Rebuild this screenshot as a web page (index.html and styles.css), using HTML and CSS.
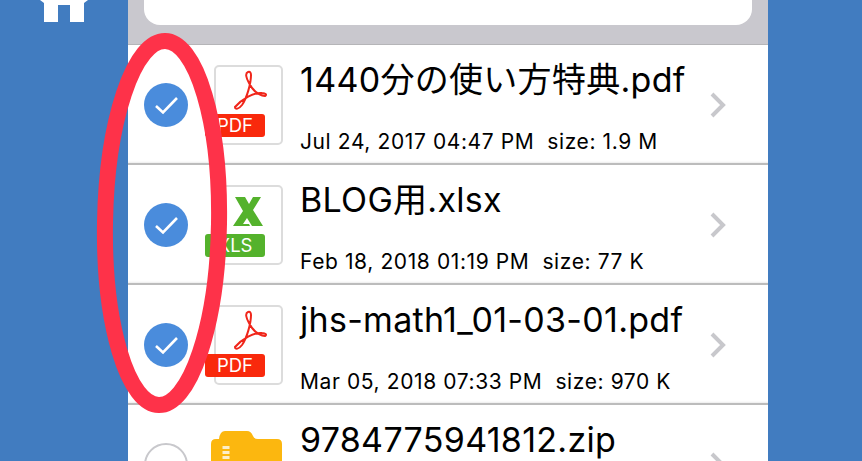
FILE: index.html
```html
<!DOCTYPE html>
<html lang="ja">
<head>
    <meta charset="UTF-8">
    <title>Files</title>
    <link rel="stylesheet" href="styles.css">
</head>
<body>
    <div class="page">
        <div class="side-left">
            <svg class="home" width="48" height="23" viewBox="0 0 48 23">
                <path d="M0 0H48L44 3V22H30V5H18V22H4V3Z" fill="#fff"/>
            </svg>
        </div>
        <main class="panel">
            <div class="search-bar"><div class="search-box"></div></div>
            <div class="row">
                <span class="check on"><svg width="44" height="44" viewBox="0 0 44 44"><path d="M12 23L19 29.500L33 15" fill="none" stroke="#fff" stroke-width="2.600"/></svg></span>
                <div class="thumb">
                    <svg class="acrobat" width="36" height="44" viewBox="0 0 36 44"><path d="M16 3C13 4 14 9 17 14C20 20 25 26 33 27C35 26 34 24 30 24C22 23 10 30 3 38C3 41 7 40 10 36C15 29 19 14 19 6C19 4 18 2 16 3Z" fill="none" stroke="#f0261b" stroke-width="2"/></svg>
                    <span class="badge red">PDF</span>
                </div>
                <div class="info">
                    <div class="name">1440分の使い方特典.pdf</div>
                    <div class="meta">Jul 24, 2017 04:47 PM&nbsp; size: 1.9 M</div>
                </div>
                <svg class="chevron" width="16" height="26" viewBox="0 0 16 26"><path d="M2 2L13 13L2 24" fill="none" stroke="#c8c8cc" stroke-width="4"/></svg>
            </div>
            <div class="row">
                <span class="check on"><svg width="44" height="44" viewBox="0 0 44 44"><path d="M12 23L19 29.500L33 15" fill="none" stroke="#fff" stroke-width="2.600"/></svg></span>
                <div class="thumb">
                    <svg class="xl" width="34" height="34" viewBox="0 0 34 34"><path d="M3 2H13L17 9L21 2H29L21 15L31 31H20L15 23L11 29H17L18 31H1L11 16Z" fill="#54b22c"/></svg>
                    <span class="badge green">XLS</span>
                </div>
                <div class="info">
                    <div class="name">BLOG用.xlsx</div>
                    <div class="meta">Feb 18, 2018 01:19 PM&nbsp; size: 77 K</div>
                </div>
                <svg class="chevron" width="16" height="26" viewBox="0 0 16 26"><path d="M2 2L13 13L2 24" fill="none" stroke="#c8c8cc" stroke-width="4"/></svg>
            </div>
            <div class="row">
                <span class="check on"><svg width="44" height="44" viewBox="0 0 44 44"><path d="M12 23L19 29.500L33 15" fill="none" stroke="#fff" stroke-width="2.600"/></svg></span>
                <div class="thumb">
                    <svg class="acrobat" width="36" height="44" viewBox="0 0 36 44"><path d="M16 3C13 4 14 9 17 14C20 20 25 26 33 27C35 26 34 24 30 24C22 23 10 30 3 38C3 41 7 40 10 36C15 29 19 14 19 6C19 4 18 2 16 3Z" fill="none" stroke="#f0261b" stroke-width="2"/></svg>
                    <span class="badge red">PDF</span>
                </div>
                <div class="info">
                    <div class="name">jhs-math1_01-03-01.pdf</div>
                    <div class="meta">Mar 05, 2018 07:33 PM&nbsp; size: 970 K</div>
                </div>
                <svg class="chevron" width="16" height="26" viewBox="0 0 16 26"><path d="M2 2L13 13L2 24" fill="none" stroke="#c8c8cc" stroke-width="4"/></svg>
            </div>
            <div class="row">
                <span class="check"></span>
                <div class="folder">
                    <svg width="72" height="60" viewBox="0 0 72 60"><path d="M0 13Q0 8 5 8H8Q9 0 14 0H36Q40 0 42 5Q43 8 47 8H66Q71 8 71 13V60H0Z" fill="#fcb70f"/><path d="M15 15V58" stroke="#fdeec8" stroke-width="7" stroke-dasharray="3 2"/></svg>
                </div>
                <div class="info">
                    <div class="name">9784775941812.zip</div>
                </div>
                <svg class="chevron" width="16" height="26" viewBox="0 0 16 26"><path d="M2 2L13 13L2 24" fill="none" stroke="#c8c8cc" stroke-width="4"/></svg>
            </div>
        </main>
        <div class="side-right"></div>
    </div>
    <svg class="marker" width="862" height="461" viewBox="0 0 862 461">
        <ellipse cx="162" cy="223" rx="57" ry="182" transform="rotate(1 162 223)" fill="none" stroke="#fe3249" stroke-width="16"/>
    </svg>
</body>
</html>
```
FILE: styles.css
```css
body {
    margin: 0;
    height: 461px;
    overflow: hidden;
    background-color: #417cc0;
    font-family: Inter, "Noto Sans CJK JP", sans-serif;
    color: #000;
}

.page {
    display: flex;
    height: 461px;
    overflow: hidden;
}

.side-left {
    width: 128px;
    flex: none;
    box-sizing: border-box;
    padding-left: 40px;
}

.side-right {
    flex: 1;
}

.home {
    display: block;
}

.panel {
    width: 640px;
    flex: none;
    background-color: #fff;
}

.search-bar {
    height: 45px;
    padding: 0 16px;
    background-color: #c9c8ce;
    border-bottom: 1px solid #b5b5b8;
    box-sizing: border-box;
}

.search-box {
    height: 25px;
    background-color: #fff;
    border-radius: 0 0 16px 16px;
}

.row {
    display: flex;
    align-items: center;
    height: 120px;
    box-sizing: border-box;
    padding: 2px 42px 0 16px;
    border-bottom: 2px solid #bcbcbc;
    background-color: #fff;
    box-shadow: inset 0 -3px 3px -3px #d8d8d8;
}

.check {
    width: 44px;
    height: 44px;
    flex: none;
    box-sizing: border-box;
    border: 2px solid #c8c8cc;
    border-radius: 50%;
    overflow: hidden;
}

.check.on {
    border: none;
    background-color: #4a8cdc;
}

.check svg {
    display: block;
}

.thumb {
    position: relative;
    width: 69px;
    height: 80px;
    flex: none;
    margin-left: 26px;
    box-sizing: border-box;
    border: 2px solid #dcdcdc;
    border-radius: 5px;
    background-color: #fff;
}

.folder {
    align-self: flex-start;
    width: 72px;
    flex: none;
    margin: 24px 0 0 23px;
}

.acrobat {
    position: absolute;
    left: 16px;
    top: 2px;
}

.xl {
    position: absolute;
    left: 16px;
    top: 8px;
}

.badge {
    position: absolute;
    left: -11px;
    top: 47px;
    width: 60px;
    height: 23px;
    border-radius: 3px;
    color: #fff;
    font-size: 18.500px;
    line-height: 23px;
    text-align: center;
}

.red {
    background-color: #f9290c;
}

.green {
    background-color: #54b22c;
}

.info {
    flex: 1;
    height: 116px;
    margin-left: 17px;
    align-self: flex-start;
}

.name {
    margin-top: 13px;
    font-size: 34px;
    line-height: 40px;
    letter-spacing: 0.300px;
    white-space: nowrap;
}

.meta {
    margin-top: 31px;
    font-size: 21px;
    line-height: 22px;
    letter-spacing: 0.600px;
    white-space: nowrap;
}

.chevron {
    flex: none;
    display: block;
}

.marker {
    position: absolute;
    left: 0;
    top: 0;
}
```
